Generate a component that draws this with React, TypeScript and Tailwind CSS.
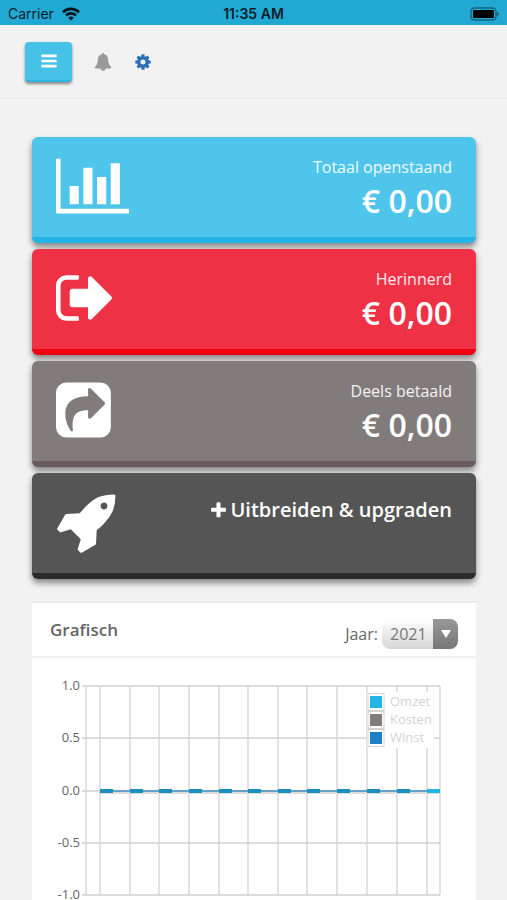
import { useState, type ReactNode } from "react";

const icons = {
  bars: "M1664 1344v128q0 26-19 45t-45 19h-1408q-26 0-45-19t-19-45v-128q0-26 19-45t45-19h1408q26 0 45 19t19 45zm0-512v128q0 26-19 45t-45 19h-1408q-26 0-45-19t-19-45v-128q0-26 19-45t45-19h1408q26 0 45 19t19 45zm0-512v128q0 26-19 45t-45 19h-1408q-26 0-45-19t-19-45v-128q0-26 19-45t45-19h1408q26 0 45 19t19 45z",
  bell: "M912 1696q0-16-16-16-59 0-101.5-42.5t-42.5-101.5q0-16-16-16t-16 16q0 73 51.5 124.5t124.5 51.5q16 0 16-16zm816-288q0 52-38 90t-90 38h-448q0 106-75 181t-181 75-181-75-75-181h-448q-52 0-90-38t-38-90q50-42 91-88t85-119.5 74.5-158.5 50-206 19.5-260q0-152 117-282.5t307-158.5q-8-19-8-39 0-40 28-68t68-28 68 28 28 68q0 20-8 39 190 28 307 158.5t117 282.5q0 139 19.5 260t50 206 74.5 158.5 85 119.5 91 88z",
  cog: "M1152 896q0-106-75-181t-181-75-181 75-75 181 75 181 181 75 181-75 75-181zm512-109v222q0 12-8 23t-20 13l-185 28q-19 54-39 91 35 50 107 138 10 12 10 25t-9 23q-27 37-99 108t-94 71q-12 0-26-9l-138-108q-44 23-91 38-16 136-29 186-7 28-36 28h-222q-14 0-24.5-8.5t-11.5-21.5l-28-184q-49-16-90-37l-141 107q-10 9-25 9-14 0-25-11-126-114-165-168-7-10-7-23 0-12 8-23 15-21 51-66.5t54-70.5q-27-50-41-99l-183-27q-13-2-21-12.5t-8-23.5v-222q0-12 8-23t19-13l186-28q14-46 39-92-40-57-107-138-10-12-10-24 0-10 9-23 26-36 98.5-107.5t94.5-71.5q13 0 26 10l138 107q44-23 91-38 16-136 29-186 7-28 36-28h222q14 0 24.5 8.5t11.5 21.5l28 184q49 16 90 37l142-107q9-9 24-9 13 0 25 10 129 119 165 170 7 8 7 22 0 12-8 23-15 21-51 66.5t-54 70.5q26 50 41 98l183 28q13 2 21 12.5t8 23.5z",
  plus: "M1600 736v192q0 40-28 68t-68 28h-416v416q0 40-28 68t-68 28h-192q-40 0-68-28t-28-68v-416h-416q-40 0-68-28t-28-68v-192q0-40 28-68t68-28h416v-416q0-40 28-68t68-28h192q40 0 68 28t28 68v416h416q40 0 68 28t28 68z",
  chart:
    "M640 896v512h-256v-512h256zM1024 384v1024h-256v-1024h256zM2048 1536v128h-2048v-1536h128v1408h1920zM1408 640v768h-256v-768h256zM1792 256v1152h-256v-1152h256z",
  signOut:
    "M704 1440q0 4 1 20t.5 26.5-3 23.5-10 19.5-20.5 6.5h-320q-119 0-203.5-84.5t-84.5-203.5v-704q0-119 84.5-203.5t203.5-84.5h320q13 0 22.5 9.5t9.5 22.5q0 4 1 20t.5 26.5-3 23.5-10 19.5-20.5 6.5h-320q-66 0-113 47t-47 113v704q0 66 47 113t113 47h312l11.5 1 11.5 3 8 5.5 7 9 2 13.5zm928-544q0 26-19 45l-544 544q-19 19-45 19t-45-19-19-45v-288h-448q-26 0-45-19t-19-45v-384q0-26 19-45t45-19h448v-288q0-26 19-45t45-19 45 19l544 544q19 19 19 45z",
  share:
    "M288 128h960q119 0 203.500 84.500t84.500 203.500v960q0 119-84.500 203.500t-203.500 84.500h-960q-119 0-203.500-84.500t-84.500-203.500v-960q0-119 84.500-203.500t203.500-84.500zM898 512C540 512 262 640 262 1015C262 1200 335 1370 412 1478C432 1502 482 1500 474 1455C430 1040 560 900 898 900V1088C898 1145 945 1160 985 1122L1362 745Q1386 714 1362 678L985 305C945 265 898 280 898 330Z",
  rocket:
    "M1440 448q0-40-28-68t-68-28-68 28-28 68 28 68 68 28 68-28 28-68zm224-288q0 249-75.500 430.500t-253.500 360.500q-81 80-195 176l-20 379q-2 16-16 26l-384 224q-7 4-16 4-12 0-23-9l-64-64q-13-14-8-32l85-276-281-281-276 85q-3 1-9 1-14 0-23-9l-64-64q-17-19-5-39l224-384q10-14 26-16l379-20q96-114 176-195 188-187 358-258t431-71q14 0 24 9.500t10 22.500z",
};

type IconProps = {
  name: keyof typeof icons;
  className: string;
  viewBox?: string;
};

function Icon({ name, className, viewBox = "0 0 1792 1792" }: IconProps) {
  return (
    <svg className={className} viewBox={viewBox} fill="currentColor" fillRule="evenodd" aria-hidden="true">
      <path d={icons[name]} />
    </svg>
  );
}

function StatusBar() {
  return (
    <div className="grid h-[25px] grid-cols-3 items-center bg-[#21a9d3] px-2 pt-0.5 font-['Inter','Liberation_Sans',sans-serif] text-sm text-[#0b2029]">
      <div className="flex items-center gap-2">
        <span>Carrier</span>
        <svg className="h-[14px] w-[18px]" viewBox="0 0 18 14" fill="none" stroke="#06141a" strokeWidth="2.700">
          <path d="M1 5.200a11.500 11.500 0 0 1 16 0" />
          <path d="M4 8.400a7.200 7.200 0 0 1 10 0" />
          <path d="M9 13.500l-2.700-2.800a3.900 3.900 0 0 1 5.400 0z" fill="#06141a" stroke="none" />
        </svg>
      </div>
      <span className="text-center font-semibold">11:35 AM</span>
      <svg className="h-[14px] w-[30px] justify-self-end" viewBox="0 0 30 14">
        <rect x="2" y="1" width="25" height="12" rx="3.500" fill="none" stroke="#12647d" strokeWidth="1.500" />
        <rect x="4" y="3" width="21" height="8" rx="1" fill="#000" />
        <path d="M28 5v4q2-.5 2-2t-2-2z" fill="#12647d" />
      </svg>
    </div>
  );
}

type CardProps = {
  color: string;
  icon: ReactNode;
  children: ReactNode;
};

function Card({ color, icon, children }: CardProps) {
  return (
    <a
      href="#"
      className={`flex h-[106px] items-start justify-between rounded-md border-b-[6px] px-6 pt-[17px] text-white shadow-[0_4px_6px_rgba(0,0,0,0.45)] ${color}`}
    >
      {icon}
      {children}
    </a>
  );
}

function Amount({ label, value }: { label: string; value: string }) {
  return (
    <div className="text-right">
      <div className="text-base leading-[26px] text-white/90">{label}</div>
      <div className="text-[32px] leading-[42px] font-semibold">{value}</div>
    </div>
  );
}

const columns = [68, 98, 127, 157, 187, 216, 246, 275, 305, 335, 365, 395];
const rows = [
  { y: 28, label: "1.0" },
  { y: 80, label: "0.5" },
  { y: 133, label: "0.0" },
  { y: 185, label: "-0.5" },
  { y: 237, label: "-1.0" },
];
const legend = [
  { label: "Omzet", color: "#23b5e8" },
  { label: "Kosten", color: "#827b7b" },
  { label: "Winst", color: "#1b81c4" },
];

function Chart() {
  return (
    <svg className="block w-full" viewBox="0 0 444 243" role="img" aria-label="Grafisch">
      <g stroke="#d2d2d2" strokeWidth="1.300">
        {rows.map((r) => (
          <line key={r.y} x1="50" x2="408" y1={r.y} y2={r.y} />
        ))}
        {[54, ...columns, 408].map((x) => (
          <line key={x} x1={x} x2={x} y1="28" y2="237" />
        ))}
      </g>
      {rows.map((r) => (
        <text key={r.y} x="48" y={r.y + 4} textAnchor="end" fontSize="13" fill="#666">
          {r.label}
        </text>
      ))}

      {/* all series are zero, so they lie on the same line */}
      <rect x="68" y="134" width="340" height="2" fill="#dcdcdc" />
      <rect x="68" y="132" width="340" height="2" fill="#6a9fc4" />
      {columns.map((x, i) => (
        <rect
          key={x}
          x={x}
          y="131"
          width="13"
          height="4"
          fill={i === columns.length - 1 ? "#1fb4e4" : "#1b90bf"}
        />
      ))}

      <rect x="335" y="34" width="67" height="56" fill="#fff" />
      {legend.map((l, i) => (
        <g key={l.label}>
          <rect x="336" y={35.5 + i * 18} width="16" height="17" fill="#fff" stroke="#d2d2d2" />
          <rect x="338" y={38 + i * 18} width="12" height="12" fill={l.color} />
          <text x="358" y={48 + i * 18} fontSize="13" fill="#d3d3d3">
            {l.label}
          </text>
        </g>
      ))}
    </svg>
  );
}

export default function App() {
  const [year, setYear] = useState("2021");

  return (
    <div className="min-h-screen bg-[#f2f2f2] font-['Open_Sans','Noto_Sans',sans-serif]">
      <StatusBar />

      <header className="flex h-[74px] items-center border-b border-[#e9e9e9] px-[25px]">
        <button
          type="button"
          aria-label="Menu"
          className="flex h-10 w-[47px] items-center justify-center rounded-sm border-b-2 border-[#2bb7e2] bg-[#46c2e8] text-white shadow-[0_2px_3px_rgba(0,0,0,0.45)]"
        >
          <Icon name="bars" className="size-[18px]" />
        </button>
        <button type="button" aria-label="Meldingen" className="ml-[22px] text-[#999]">
          <Icon name="bell" className="size-[18px]" />
        </button>
        <button type="button" aria-label="Instellingen" className="ml-[22px] text-[#2a6fb5]">
          <Icon name="cog" className="size-[18px]" />
        </button>
      </header>

      <main className="pt-[38px] pr-[31px] pl-8">
        <div className="flex flex-col gap-1.5">
          <Card
            color="bg-[#4fc5eb] border-[#23b5e8]"
            icon={<Icon name="chart" className="h-16 w-[73px]" viewBox="0 0 2048 1792" />}
          >
            <Amount label="Totaal openstaand" value="€ 0,00" />
          </Card>
          <Card
            color="bg-[#ee3145] border-[#ee0010]"
            icon={<Icon name="signOut" className="size-16" viewBox="64 0 1792 1792" />}
          >
            <Amount label="Herinnerd" value="€ 0,00" />
          </Card>
          <Card color="bg-[#827b7b] border-[#695a5f]" icon={<Icon name="share" className="size-16" />}>
            <Amount label="Deels betaald" value="€ 0,00" />
          </Card>
          <Card color="bg-[#555] border-[#2b2b2b]" icon={<Icon name="rocket" className="size-16" />}>
            <div className="flex items-center gap-0.5 pt-1.5 text-xl font-semibold">
              <Icon name="plus" className="size-[19px]" />
              <span>Uitbreiden &amp; upgraden</span>
            </div>
          </Card>
        </div>

        <section className="mt-[22px] border-t-2 border-[#ebebeb] bg-white">
          <div className="flex h-[55px] items-center justify-between border-b-2 border-[#f0f0f0] px-[18px] text-[#666]">
            <h2 className="text-[17px] font-semibold">Grafisch</h2>
            <div className="flex items-center gap-1 pt-2 text-base">
              <label htmlFor="jaar">Jaar:</label>
              <div className="relative">
                <select
                  id="jaar"
                  value={year}
                  onChange={(e) => setYear(e.target.value)}
                  className="h-[30px] w-[76px] appearance-none rounded-lg bg-linear-to-b from-white to-[#d6d6d6] pl-2 text-base text-[#777]"
                >
                  <option>2021</option>
                  <option>2020</option>
                  <option>2019</option>
                </select>
                <span className="pointer-events-none absolute inset-y-0 right-0 flex w-[25px] items-center justify-center rounded-r-lg bg-linear-to-b from-[#999] to-[#777] text-white">
                  <svg className="h-2 w-2.5" viewBox="0 0 10 8" fill="currentColor">
                    <path d="M0 0h10L5 8z" />
                  </svg>
                </span>
              </div>
            </div>
          </div>
          <Chart />
        </section>
      </main>
    </div>
  );
}
